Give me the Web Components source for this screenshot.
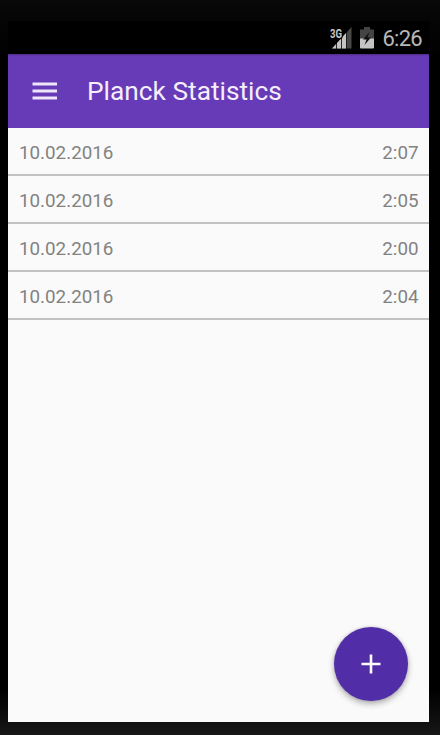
<!DOCTYPE html>
<html lang="en">
<head>
<meta charset="utf-8">
<title>Planck Statistics</title>
<style>
  html, body {
    margin: 0;
    height: 100%;
    background: #060606;
    font-family: Roboto, sans-serif;
    overflow: hidden;
  }
</style>
</head>
<body>
<device-frame>
  <status-bar slot="status" time="6:26"></status-bar>
  <app-toolbar slot="toolbar">Planck Statistics</app-toolbar>
  <stat-row date="10.02.2016" time="2:07"></stat-row>
  <stat-row date="10.02.2016" time="2:05"></stat-row>
  <stat-row date="10.02.2016" time="2:00"></stat-row>
  <stat-row date="10.02.2016" time="2:04"></stat-row>
  <add-button slot="action"></add-button>
</device-frame>

<script>
class DeviceFrame extends HTMLElement {
  connectedCallback() {
    this.attachShadow({ mode: "open" });
    this.shadowRoot.innerHTML = `
      <style>
        :host {
          display: block;
          box-sizing: border-box;
          height: 735px;
          padding: 21px 11px 13px 8px;
          background: linear-gradient(#090909 0, #050505 21px, #000 60px, #000 690px, #101010 722px, #171717 735px);
        }

        .screen {
          position: relative;
          display: flex;
          flex-direction: column;
          height: 100%;
          background: #fafafa;
        }

        ::slotted(add-button) {
          position: absolute;
          right: 21px;
          bottom: 21px;
        }
      </style>

      <div class="screen">
        <slot name="status"></slot>
        <slot name="toolbar"></slot>
        <main><slot></slot></main>
        <slot name="action"></slot>
      </div>
    `;
  }
}

class StatusBar extends HTMLElement {
  connectedCallback() {
    this.attachShadow({ mode: "open" });
    this.shadowRoot.innerHTML = `
      <style>
        :host {
          display: flex;
          align-items: center;
          justify-content: flex-end;
          flex: none;
          box-sizing: border-box;
          height: 33px;
          padding-right: 7px;
          background: #000;
          color: #b8b8b8;
        }

        svg {
          display: block;
        }

        .battery {
          margin: 0 8px 0 8px;
        }

        .time {
          font-size: 22px;
          line-height: 33px;
          padding-top: 1px;
          letter-spacing: -.7px;
        }
      </style>

      <svg width="22" height="24" viewBox="0 0 22 24">
        <path d="M21.5 1V22.5H2Z" fill="#484848"/>
        <path d="M16.5 6.5V22.5H2Z" fill="#c4c4c4"/>
        <path d="M0 1H12.5V12L9 14H0Z" fill="#000"/>
        <path d="M6.5 14V23M11.5 9V23M16.5 4V23" stroke="#000" stroke-width=".8"/>
        <text x="0" y="12" font-size="12" font-weight="700" fill="#c8c8c8" textLength="12" lengthAdjust="spacingAndGlyphs">3G</text>
      </svg>
      <svg class="battery" width="14" height="22" viewBox="0 0 14 22">
        <path d="M4 0H10V2.5H14V12H0V2.5H4Z" fill="#444"/>
        <path d="M0 11.5H14V20.5Q14 21.5 13 21.5H1Q0 21.5 0 20.5Z" fill="#c4c4c4"/>
        <path d="M9.5 5L3 12.5H6.5L4.5 18L11 10.5H7.5Z" fill="#111"/>
      </svg>
      <span class="time">${this.getAttribute("time")}</span>
    `;
  }
}

class AppToolbar extends HTMLElement {
  connectedCallback() {
    this.attachShadow({ mode: "open" });
    this.shadowRoot.innerHTML = `
      <style>
        :host {
          display: flex;
          align-items: center;
          flex: none;
          box-sizing: border-box;
          height: 74px;
          padding-left: 24px;
          background: linear-gradient(#4b2b82 0, #673ab7 2px);
          color: #f4eefb;
          font-size: 26.3px;
          line-height: 74px;
        }

        svg {
          display: block;
          margin-right: 29px;
        }
      </style>

      <svg width="26" height="18" viewBox="0 0 26 18">
        <path d="M.5 2H25M.5 9H25M.5 16H25" stroke="#eee5f8" stroke-width="2.8"/>
      </svg>
      <span><slot></slot></span>
    `;
  }
}

class StatRow extends HTMLElement {
  connectedCallback() {
    this.attachShadow({ mode: "open" });
    this.shadowRoot.innerHTML = `
      <style>
        :host {
          display: flex;
          justify-content: space-between;
          box-sizing: border-box;
          height: 48px;
          padding: 0 10.5px 0 11px;
          border-bottom: 2px solid #c2c2c2;
          color: #828282;
          font-size: 18.8px;
          line-height: 50px;
        }
      </style>

      <span>${this.getAttribute("date")}</span>
      <span>${this.getAttribute("time")}</span>
    `;
  }
}

class AddButton extends HTMLElement {
  connectedCallback() {
    this.attachShadow({ mode: "open" });
    this.shadowRoot.innerHTML = `
      <style>
        :host {
          display: flex;
          align-items: center;
          justify-content: center;
          width: 74px;
          height: 74px;
          border-radius: 50%;
          background: #512da8;
          box-shadow: 0 3px 6px rgba(0, 0, 0, .3), 0 0 3px rgba(0, 0, 0, .15);
        }
      </style>

      <svg width="20" height="20" viewBox="0 0 20 20">
        <path d="M.5 10H19.5M10 .5V19.5" stroke="#fff" stroke-width="2.6"/>
      </svg>
    `;
  }
}

customElements.define("device-frame", DeviceFrame);
customElements.define("status-bar", StatusBar);
customElements.define("app-toolbar", AppToolbar);
customElements.define("stat-row", StatRow);
customElements.define("add-button", AddButton);
</script>
</body>
</html>
